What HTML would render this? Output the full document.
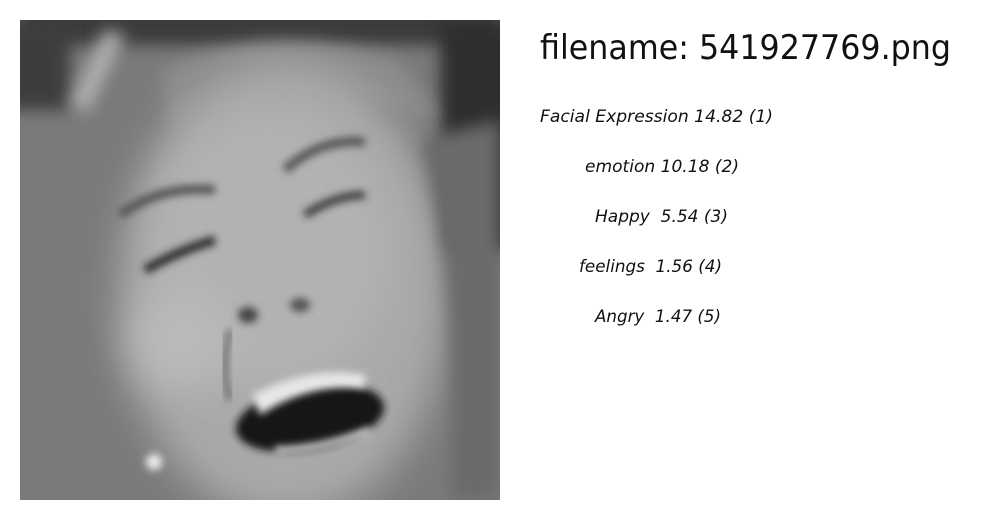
<!DOCTYPE html>
<html><head><meta charset="utf-8"><style>
html,body{margin:0;padding:0;background:#fff;width:1000px;height:520px;overflow:hidden}
svg{position:absolute;left:0;top:0}
text{font-family:"DejaVu Sans","Liberation Sans",sans-serif;fill:#111;white-space:pre}
.i{font-style:italic;font-size:17px}
</style></head><body>
<svg width="1000" height="520" viewBox="0 0 1000 520">
<defs>
<filter id="b8" x="-50%" y="-50%" width="200%" height="200%"><feGaussianBlur stdDeviation="8"/></filter>
<filter id="b4" x="-50%" y="-50%" width="200%" height="200%"><feGaussianBlur stdDeviation="4"/></filter>
<filter id="b20" x="-50%" y="-50%" width="200%" height="200%"><feGaussianBlur stdDeviation="20"/></filter>
<clipPath id="c"><rect x="20" y="20" width="480" height="480"/></clipPath>
</defs>
<g clip-path="url(#c)">
<g transform="translate(20,20)">
<rect width="480" height="480" fill="#7a7a7a"/>
<rect x="0" y="-30" width="480" height="55" fill="#3a3a3a" filter="url(#b8)"/>
<rect x="420" y="0" width="80" height="230" fill="#2e2e2e" filter="url(#b8)"/>
<rect x="-20" y="0" width="70" height="90" fill="#3c3c3c" filter="url(#b8)"/>
<path d="M50 85 L85 10 L105 15 L68 92Z" fill="#b0b0b0" filter="url(#b8)"/>
<path d="M140 50 Q250 5 380 40 L420 100 Q300 60 150 110Z" fill="#8a8a8a" filter="url(#b8)"/>
<ellipse cx="265" cy="270" rx="165" ry="230" fill="#a9a9a9" filter="url(#b20)"/>
<ellipse cx="250" cy="230" rx="120" ry="140" fill="#b2b2b2" filter="url(#b20)"/>
<ellipse cx="160" cy="320" rx="50" ry="50" fill="#bababa" filter="url(#b20)"/>
<path d="M400 120 Q440 250 430 480 L480 480 L480 100Z" fill="#6a6a6a" filter="url(#b8)"/>
<path d="M100 195 Q140 165 195 170" stroke="#555" stroke-width="9" fill="none" filter="url(#b4)"/>
<path d="M265 150 Q300 118 345 122" stroke="#555" stroke-width="9" fill="none" filter="url(#b4)"/>
<path d="M125 250 Q160 230 195 220" stroke="#2a2a2a" stroke-width="9" fill="none" filter="url(#b4)"/>
<path d="M285 195 Q315 175 345 175" stroke="#3a3a3a" stroke-width="8" fill="none" filter="url(#b4)"/>
<ellipse cx="228" cy="295" rx="10" ry="8" fill="#444" filter="url(#b4)"/>
<ellipse cx="280" cy="285" rx="10" ry="7" fill="#555" filter="url(#b4)"/>
<path d="M210 310 Q200 350 210 380" stroke="#6a6a6a" stroke-width="6" fill="none" filter="url(#b4)"/>
<ellipse cx="290" cy="398" rx="75" ry="32" transform="rotate(-10 290 398)" fill="#141414" filter="url(#b4)"/>
<path d="M232 375 Q290 345 345 355 L345 368 Q290 362 240 395Z" fill="#e8e8e8" filter="url(#b4)"/>
<path d="M255 430 Q300 430 350 410" stroke="#d8d8d8" stroke-width="7" fill="none" filter="url(#b4)"/>
<circle cx="134" cy="442" r="8" fill="#eee" filter="url(#b4)"/>
</g>
</g>
<text x="540" y="59" font-size="34" textLength="411" lengthAdjust="spacingAndGlyphs">filename: 541927769.png</text>
<text class="i" x="540" y="122" textLength="233" lengthAdjust="spacingAndGlyphs">Facial Expression 14.82 (1)</text>
<text class="i" x="585" y="172" textLength="154" lengthAdjust="spacingAndGlyphs">emotion 10.18 (2)</text>
<text class="i" x="595" y="222" textLength="133" lengthAdjust="spacingAndGlyphs">Happy  5.54 (3)</text>
<text class="i" x="579" y="272" textLength="143" lengthAdjust="spacingAndGlyphs">feelings  1.56 (4)</text>
<text class="i" x="595" y="322" textLength="126" lengthAdjust="spacingAndGlyphs">Angry  1.47 (5)</text>
</svg>
</body></html>
